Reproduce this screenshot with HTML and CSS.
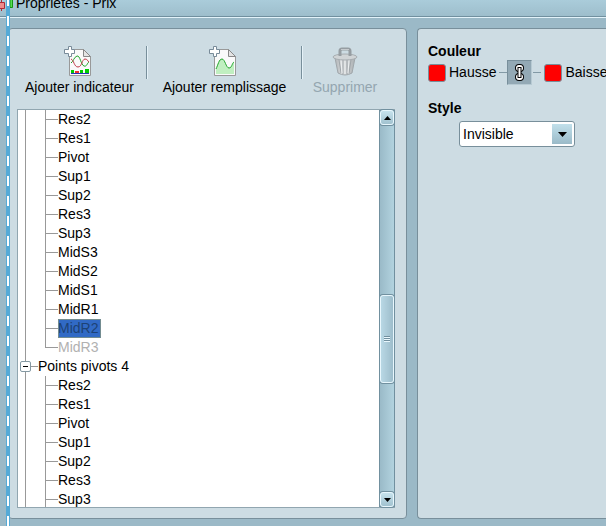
FILE: index.html
```
<!DOCTYPE html>
<html lang="fr">
<head>
<meta charset="utf-8">
<title>Propriétés - Prix</title>
<link rel="stylesheet" href="styles.css">
</head>
<body>
<header class="titlebar"><h1>Propriétés - Prix</h1></header>
<div class="selection-edge" aria-hidden="true"></div>
<svg class="candles" width="14" height="12" viewBox="0 0 14 12" aria-hidden="true">
  <path d="M1.500 0v11" stroke="#b02a35"/>
  <path d="M-1 2.500H4.500v6H-1z" fill="#ef8c8c" stroke="#b02a35"/>
  <path d="M10 -1h2.500v8.500H10z" fill="#55df55" stroke="#159515"/>
</svg>
<main class="workspace">
  <section class="panel series">
    <div class="toolbar">
      <button class="tool tool-indicator" type="button">
        <svg width="28" height="32" viewBox="0 0 28 32" aria-hidden="true">
          <path d="M5.500 4.500h14l7 7v19h-21z" fill="#fafafa" stroke="#999"/>
          <path d="M19.500 4.500v7h7z" fill="#e4e4e4" stroke="#888"/>
          <path d="M7 18c2-1 3-6 6-7s4 9 7 10 3-3 5-4" fill="none" stroke="#22a52d"/>
          <path d="M7 14c3 1 3 8 7 8s4-8 7-8 2 2 4 3" fill="none" stroke="#c13a4a"/>
          <path d="M7 25h3v3H7zm9 0h3v3h-3zm5-1h4v4h-4z" fill="#0c0"/>
          <path d="M11 26h4v2h-4z" fill="#e33"/>
          <path d="M7 28.500h18" stroke="#2636b5"/>
          <path d="M4.500 1.500h3v3h3v4h-3v3h-3v-3h-4v-4h4z" fill="#fff" stroke="#788b99"/>
        </svg>
        <span>Ajouter indicateur</span>
      </button>
      <span class="divider"></span>
      <button class="tool tool-fill" type="button">
        <svg width="28" height="32" viewBox="0 0 28 32" aria-hidden="true">
          <path d="M5.500 4.500h14l7 7v19h-21z" fill="#fafafa" stroke="#999"/>
          <path d="M19.500 4.500v7h7z" fill="#e4e4e4" stroke="#888"/>
          <path d="M7 24c2-4 3-10 6-10s4 9 7 9 3-5 5-6v12H7z" fill="#c0efc0"/>
          <path d="M7 24c2-4 3-10 6-10s4 9 7 9 3-5 5-6" fill="none" stroke="#20a52a"/>
          <path d="M4.500 1.500h3v3h3v4h-3v3h-3v-3h-4v-4h4z" fill="#fff" stroke="#788b99"/>
        </svg>
        <span>Ajouter remplissage</span>
      </button>
      <span class="divider"></span>
      <button class="tool tool-delete" type="button" disabled>
        <svg width="28" height="32" viewBox="0 0 28 32" aria-hidden="true">
          <defs><linearGradient id="metal"><stop stop-color="#b0b4b7"/><stop offset=".4" stop-color="#dbddde"/><stop offset="1" stop-color="#abb0b3"/></linearGradient></defs>
          <path d="M4 13l3 15q7 4 14 0l3-15z" fill="url(#metal)" stroke="#a0a7ab"/>
          <path d="M8 15l2 13M12 15v14M16 15v14M20 15l-2 13" stroke="#a0a6aa"/>
          <path d="M10 15l1 13M14 15v14M18 15l-1 13" stroke="#edf0f1"/>
          <ellipse cx="14" cy="12" rx="12" ry="3" fill="#d0d4d6" stroke="#a7adb1"/>
          <path d="M9 11V6q0-2 2-2h6q2 0 2 2v5" fill="none" stroke="#969da2" stroke-width="3"/>
          <path d="M10 4.500h8" stroke="#c6cbce"/>
        </svg>
        <span>Supprimer</span>
      </button>
    </div>
    <div class="tree-frame">
      <div class="tree">
        <ul class="branch">
          <li>Res2</li><li>Res1</li><li>Pivot</li><li>Sup1</li><li>Sup2</li><li>Res3</li><li>Sup3</li>
          <li>MidS3</li><li>MidS2</li><li>MidS1</li><li>MidR1</li>
          <li><span class="selected">MidR2</span></li><li class="faded">MidR3</li>
        </ul>
        <div class="group"><button class="toggle" type="button" aria-label="Réduire Points pivots 4"></button><span>Points pivots 4</span></div>
        <ul class="branch">
          <li>Res2</li><li>Res1</li><li>Pivot</li><li>Sup1</li><li>Sup2</li><li>Res3</li><li>Sup3</li>
        </ul>
      </div>
      <div class="scrollbar">
        <button class="scroll-button" type="button" aria-label="Monter"><svg width="7" height="4" viewBox="0 0 7 4"><path d="M0 4h7L3.500 0z"/></svg></button>
        <div class="track"><div class="thumb"><span class="grip"></span></div></div>
        <button class="scroll-button" type="button" aria-label="Descendre"><svg width="7" height="4" viewBox="0 0 7 4"><path d="M0 0h7L3.500 4z"/></svg></button>
      </div>
    </div>
  </section>
  <section class="panel settings">
    <h2>Couleur</h2>
    <div class="colours">
      <button class="colour" type="button"><span class="swatch"></span>Hausse</button>
      <span class="dash"></span>
      <button class="link" type="button" aria-label="Lier les couleurs">
        <svg width="11" height="19" viewBox="0 0 11 19" aria-hidden="true">
          <g fill="#000" stroke="#000" stroke-width="4"><rect x="3" y="3" width="5" height="4" rx="2"/><rect x="3" y="12" width="5" height="4" rx="2"/></g>
          <g fill="none" stroke="#fff" stroke-width="2"><rect x="3" y="3" width="5" height="4" rx="2"/><rect x="3" y="12" width="5" height="4" rx="2"/></g>
          <path d="M5.500 4v11" stroke="#000" stroke-width="4"/>
          <path d="M5.500 5v9" stroke="#fff" stroke-width="2"/>
        </svg>
      </button>
      <span class="dash"></span>
      <button class="colour" type="button"><span class="swatch"></span>Baisse</button>
    </div>
    <h2><label for="style">Style</label></h2>
    <div class="select-box">
      <select id="style"><option>Invisible</option></select>
      <span class="select-arrow"><svg width="9" height="5" viewBox="0 0 9 5"><path d="M0 0h9L4.500 5z"/></svg></span>
    </div>
  </section>
</main>
</body>
</html>
```

FILE: styles.css
```
* { box-sizing: border-box; }
body {
  margin: 0;
  height: 100vh;
  overflow: hidden;
  display: flex;
  flex-direction: column;
  background: #9bb9c7;
  font: 14px/19px "Liberation Sans", Arial, sans-serif;
  color: #000;
  position: relative;
}
h1, h2, ul { margin: 0; padding: 0; }
button {
  font: inherit;
  color: inherit;
  background: none;
  border: 0;
  padding: 0;
}
.titlebar {
  flex: none;
  height: 18px;
  display: flex;
  align-items: flex-end;
  padding: 0 0 4px 16px;
  background: linear-gradient(#aaccda, #9dbdcb);
  border-bottom: 1px solid #e3f3fa;
  box-shadow: inset 0 -1px #71909f;
}
h1 { font-size: 14px; font-weight: normal; line-height: 19px; }
.selection-edge {
  position: absolute;
  left: 6px;
  top: 0;
  bottom: 0;
  width: 4px;
  z-index: 1;
  background: #55aad6;
}
.selection-edge::before {
  content: "";
  position: absolute;
  inset: 0 1px;
  background: repeating-linear-gradient(#fff 0 6px, transparent 6px 16px, #fff 16px 20px);
}
.candles { position: absolute; left: 0; top: 0; }
.workspace {
  flex: 1;
  min-height: 0;
  display: flex;
  gap: 10px;
  padding: 10px 0 7px 8px;
}
.panel {
  background: #cddce3;
  border: 1px solid #788f9b;
  border-radius: 4px;
}
.series {
  flex: 0 1 399px;
  min-width: 0;
  display: flex;
  flex-direction: column;
  padding: 0 11px 10px 8px;
}
.toolbar { flex: none; height: 80px; padding: 16px 0 0 6px; display: flex; gap: 10px; }
.tool {
  display: flex;
  flex: none;
  flex-direction: column;
  align-items: center;
  height: 52px;
  line-height: 20px;
  white-space: nowrap;
}
.tool svg { flex: none; }
.tool:disabled { color: #94a6b0; }
.tool-indicator { width: 113px; }
.tool-fill { width: 133px; }
.tool-delete { width: 64px; }
.tool-indicator svg, .tool-fill svg { margin-right: 4px; }
.divider { width: 2px; height: 33px; margin-top: 1px; background: #788f9b; border-right: 1px solid #e5f2f8; }
.tree-frame {
  flex: 1;
  min-height: 0;
  display: flex;
  border: 1px solid #91a6b0;
  border-right: 0;
  background: #fff;
}
.tree {
  flex: 1;
  overflow: hidden;
  background: linear-gradient(#999, #999) 7px 0 / 1px 100% no-repeat;
}
.branch { list-style: none; padding-left: 27px; }
.branch li {
  height: 19px;
  padding-left: 13px;
  background:
    linear-gradient(#999, #999) 0 0 / 1px 100% no-repeat,
    linear-gradient(#999, #999) 0 9px / 13px 1px no-repeat;
}
.branch .faded {
  color: #b1b1b1;
  background:
    linear-gradient(#999, #999) 0 0 / 1px 10px no-repeat,
    linear-gradient(#999, #999) 0 9px / 13px 1px no-repeat;
}
.selected { display: inline-block; padding-right: 3px; background: #316ac5; outline: 1px solid #738c91; outline-offset: -1px; color: #1d4275; }
.group {
  height: 19px;
  display: flex;
  align-items: center;
  padding-left: 2px;
}
.group span {
  padding-left: 7px;
  background: linear-gradient(#999, #999) 0 9px / 7px 1px no-repeat;
}
.toggle {
  width: 11px;
  height: 11px;
  border: 1px solid #8499a3;
  border-radius: 2px;
  background: linear-gradient(#000, #000) center / 5px 1px no-repeat, #fff;
}
.scrollbar {
  flex: 0 0 16px;
  display: flex;
  flex-direction: column;
  border: solid #71909f;
  border-width: 0 1px;
  background: linear-gradient(90deg, #9abac8, #b2d3df);
}
.scroll-button {
  height: 15px;
  flex: none;
  display: flex;
  align-items: center;
  justify-content: center;
  background: linear-gradient(#c6e2ed, #a1c2cf);
  border: 1px solid #e8f7fd;
  border-radius: 3px;
  box-shadow: 0 0 0 1px #71909f;
}
.track { flex: 1; display: flex; flex-direction: column; }
.track::before { content: ""; flex: 171 0 0; }
.track::after { content: ""; flex: 110 0 0; }
.thumb {
  flex: 87 0 0;
  display: flex;
  align-items: center;
  justify-content: center;
  background: linear-gradient(90deg, #b9d8e5, #9dbdcb);
  border: 1px solid #e8f7fd;
  border-radius: 3px;
  box-shadow: 0 0 0 1px #71909f;
}
.grip { width: 6px; height: 6px; background: repeating-linear-gradient(#71909f 0 1px, #e8f7fd 1px 2px); }
.settings { flex: 1; min-width: 0; overflow: hidden; padding: 14px 0 0 10px; border-right: 0; border-radius: 4px 0 0 4px; }
h2 { font-size: 14px; line-height: 17px; }
.colours { display: flex; align-items: center; height: 25px; margin-bottom: 15px; white-space: nowrap; }
.colour { display: flex; align-items: center; gap: 3px; flex: none; }
.swatch { width: 18px; height: 18px; border: 1px solid #788f9b; border-radius: 3px; background: #f00; }
.dash { flex: none; width: 8px; height: 1px; margin: 0 3px; background: #8299a5; }
.dash:nth-of-type(1) { margin-right: 0; }
.link + .dash { margin: 0 3px 0 1px; }
.link {
  flex: none;
  width: 25px;
  height: 25px;
  display: flex;
  align-items: center;
  justify-content: center;
  background: #93a9b5;
  border: 1px solid #788f9b;
  border-right-color: #b7cad3;
  border-bottom-color: #b7cad3;
}
.select-box { position: relative; width: 116px; margin: 4px 0 0 31px; }
select {
  display: block;
  appearance: none;
  width: 100%;
  height: 26px;
  padding: 0 24px 0 3px;
  font: inherit;
  color: #000;
  background: #fff;
  border: 1px solid #788f9b;
  border-radius: 3px;
}
.select-arrow {
  position: absolute;
  top: 3px;
  right: 3px;
  width: 20px;
  height: 20px;
  display: flex;
  align-items: center;
  justify-content: center;
  pointer-events: none;
  background: linear-gradient(#c1e0eb, #9abac8);
}
```
